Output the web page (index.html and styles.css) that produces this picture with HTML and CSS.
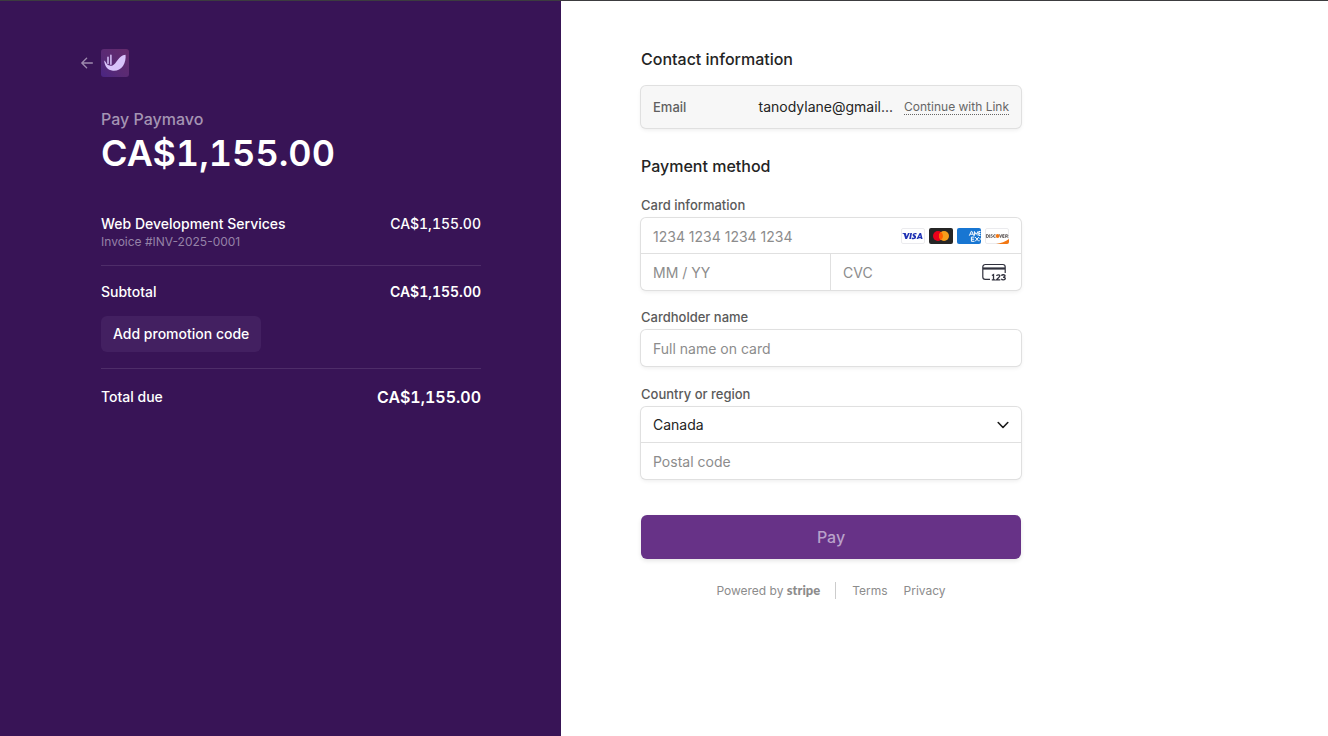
FILE: index.html
```html
<!DOCTYPE html>
<html lang="en">
<head>
<meta charset="utf-8">
<meta name="viewport" content="width=device-width, initial-scale=1">
<title>Paymavo checkout</title>
<link rel="stylesheet" href="styles.css">
</head>
<body>
<div class="checkout">
  <section class="summary">
    <div class="summary-inner">
      <header class="brand">
        <a class="back" href="#" aria-label="Back">
          <svg width="12" height="12" viewBox="0 0 12 12" fill="none" stroke="currentColor" stroke-width="1.3" stroke-linecap="round" stroke-linejoin="round"><path d="M11.4 6H.9M5.6 1.2.8 6l4.8 4.8"/></svg>
        </a>
        <svg class="brand-logo" width="28" height="28" viewBox="0 0 28 28" aria-label="Paymavo" role="img">
          <defs><linearGradient id="tile" x1="0" y1="1" x2="1" y2="0"><stop offset="0" stop-color="#492583"/><stop offset=".4" stop-color="#592a75"/><stop offset="1" stop-color="#652b6c"/></linearGradient></defs>
          <rect width="28" height="28" rx="3" fill="url(#tile)"/>
          <path d="M3.200 11.500C4.600 12 5 14.400 6.300 15.600c1.200 1 3.500 1.400 5.200.8C15.800 14.900 17.200 6.200 24.500 5.700c.5 3-.2 7.800-2.500 11.200-2.300 3.300-6 5.200-10 4.800C6.300 21.200 3.600 16.800 3.200 11.500Z" fill="#d8c3fa"/>
          <path d="M7 8.300v6.200M9.900 6.300v9" stroke="#d8c3fa" stroke-width="1.500" stroke-linecap="round"/>
        </svg>
      </header>
      <h1 class="payee">Pay Paymavo</h1>
      <p class="amount">CA$1,155.00</p>
      <div class="row item">
        <div>
          <p>Web Development Services</p>
          <p class="item-note">Invoice #INV-2025-0001</p>
        </div>
        <p class="price">CA$1,155.00</p>
      </div>
      <div class="totals">
        <div class="row"><p>Subtotal</p><p class="price strong">CA$1,155.00</p></div>
        <button class="promo" type="button">Add promotion code</button>
      </div>
      <div class="row total"><p>Total due</p><p class="price total-value">CA$1,155.00</p></div>
    </div>
  </section>

  <main class="payment">
    <form class="form">
      <h2 class="heading">Contact information</h2>
      <div class="box contact">
        <span class="contact-label">Email</span>
        <span class="contact-value">tanodylane@gmail...</span>
        <a class="contact-link" href="#">Continue with Link</a>
      </div>

      <h2 class="heading method">Payment method</h2>
      <div class="field">
        <label class="label" for="number">Card information</label>
        <div class="box">
          <div class="line">
            <input class="input" id="number" placeholder="1234 1234 1234 1234" inputmode="numeric">
            <div class="cards">
              <svg width="24" height="16" viewBox="0 0 24 16" role="img" aria-label="Visa">
                <rect x=".5" y=".5" width="23" height="15" rx="1.500" fill="#fff" stroke="#ebebee"/>
                <path fill="#1f32b4" d="M1.500 5h2.900q.5 0 .6.500l.6 3L7 5h1.800L6 11.100H4.300L2.900 6.200Q2.300 5.700 1.400 5.400ZM9.300 5H11l-1.100 6.100H8.200ZM15.700 5.200l-.3 1.300c-1-.4-2-.4-2.100.1-.1.700 2.100.8 1.800 2.600-.3 2-2.700 2.300-4.500 1.700l.3-1.400c1.200.5 2.300.4 2.400-.1.1-.7-2-.8-1.700-2.600.2-1.600 2.300-2.300 4.100-1.600ZM18.600 5h1.500l1.500 6.100H20l-.2-.9h-2.200l-.4.900h-1.700ZM18.100 8.900h1.400l-.4-2Z"/>
              </svg>
              <svg width="24" height="16" viewBox="0 0 24 16" role="img" aria-label="Mastercard">
                <rect width="24" height="16" rx="2" fill="#252525"/>
                <circle cx="9" cy="8" r="5" fill="#eb001b"/><circle cx="15" cy="8" r="5" fill="#f79e1b"/>
                <path d="M12 4a5 5 0 0 1 0 8 5 5 0 0 1 0-8" fill="#ff5f00"/>
              </svg>
              <svg width="24" height="16" viewBox="0 0 24 16" role="img" aria-label="American Express">
                <rect width="24" height="16" rx="2" fill="#1876d2"/>
                <g fill="none" stroke="#fff" stroke-width="1"><path d="m12.300 7.700 2-4.400h.5l2 4.400M13.200 6.200h2.700M17.400 7.700V3.500l1.800 2.900L21 3.500v4.200M22 3.500h1.500M22 5.500h1.500M22 7.500h1.500M22 3.500v4"/><path d="M17.400 9.100h-3v4.200h3M14.400 11.200h2.700M18.200 9.100l3.600 4.200M21.800 9.100l-3.600 4.200M22.500 9.900l1 1M22.500 12.500l1-1"/></g>
              </svg>
              <svg width="24" height="16" viewBox="0 0 24 16" role="img" aria-label="Discover">
                <rect x=".5" y=".5" width="23" height="15" rx="1.500" fill="#fff" stroke="#ebebee"/>
                <path d="M11 16c5-.8 9.500-2.500 13-5v3a2 2 0 0 1-2 2Z" fill="#f27712"/>
                <g fill="none" stroke="#4b4442" stroke-width=".8"><path d="M1.400 6.500v3.100h.7q1.500 0 1.500-1.500t-1.500-1.600ZM4.700 6.200v3.700M7.500 6.700Q5.800 6.400 5.900 7.200c.1.800 1.700.6 1.600 1.500-.1.900-1.100.9-1.900.6M10.600 6.800Q8.500 6.200 8.400 8t2.200 1.300M14.500 6.300l1.100 3.200 1.100-3.200M19.500 6.600h-1.800v2.900h1.800M17.700 8h1.600M20.700 9.900V6.600h.9q1.200 0 1.200.9t-1.200.8h-.9M21.800 8.300l1.200 1.500"/></g>
                <circle cx="12.600" cy="8" r="1.900" fill="#f27712"/>
              </svg>
            </div>
          </div>
          <div class="split">
            <input class="input" aria-label="Expiration date" placeholder="MM / YY">
            <div class="cvc">
              <input class="input" aria-label="Security code" placeholder="CVC">
              <svg width="24" height="18" viewBox="0 0 24 18" fill="none" aria-hidden="true">
                <path d="M8 16.300H3.200A2.400 2.400 0 0 1 .8 13.900V3.900a2.400 2.400 0 0 1 2.400-2.400h17.600a2.400 2.400 0 0 1 2.400 2.400v6" stroke="#30313d" stroke-width="1.200"/>
                <path d="M1 4.400h22v2.200H1Z" fill="#30313d"/>
                <g stroke="#30313d" stroke-width="1.300"><path d="m9.900 12.500 1.600-.9v5.100M9.800 16.900h3.600M14.500 12.900c.3-1.500 3.500-1.400 3.300.1-.1 1.100-1.800 2-3.300 3.800h3.800M19.400 12.700c.6-1.400 3.800-1.200 3.600.3 0 .8-.8 1.200-2 1.200 1.400 0 2.400.5 2.300 1.400-.2 1.600-3.500 1.500-4 .1"/></g>
              </svg>
            </div>
          </div>
        </div>
      </div>

      <div class="field">
        <label class="label" for="holder">Cardholder name</label>
        <div class="box"><input class="input" id="holder" placeholder="Full name on card"></div>
      </div>

      <div class="field billing">
        <label class="label" for="country">Country or region</label>
        <div class="box">
          <div class="line">
            <select class="input select" id="country"><option>Canada</option></select>
            <svg class="chevron" width="12" height="12" viewBox="0 0 12 12" fill="none" stroke="#1a1a1a" stroke-width="1.600" stroke-linecap="round" stroke-linejoin="round" aria-hidden="true"><path d="m1.200 3.500 4.800 5 4.800-5"/></svg>
          </div>
          <input class="input" aria-label="Postal code" placeholder="Postal code">
        </div>
      </div>

      <button class="pay" type="submit">Pay</button>
      <footer class="footer">
        <a class="powered" href="#">Powered by <span class="stripe">stripe</span></a>
        <nav class="legal"><a href="#">Terms</a><a href="#">Privacy</a></nav>
      </footer>
    </form>
  </main>
</div>
</body>
</html>
```
FILE: styles.css
```css
* { box-sizing: border-box; }

body {
  margin: 0;
  font-family: Inter, "Liberation Sans", sans-serif;
  font-size: 14px;
  line-height: 20px;
  color: #242424;
  background: #fff;
}

h1, h2, p { margin: 0; }
a { color: inherit; text-decoration: none; }
input, select, button { font: inherit; border: 0; border-radius: 0; margin: 0; }

.checkout {
  display: grid;
  grid-template-columns: minmax(0, 561px) minmax(0, 1fr);
  min-height: 100vh;
  border-top: 1px solid #3c3c3f;
}

.summary {
  display: flex;
  justify-content: flex-end;
  padding: 48px 80px;
  color: #fff;
  background: #381456;
  font-weight: 500;
}
.summary-inner { width: 100%; max-width: 380px; }

.brand { display: flex; align-items: center; gap: 8px; margin-left: -20px; }
.back { display: flex; color: #9e8bae; }
.brand-logo { display: block; }

.payee {
  margin-top: 30px;
  font-size: 16px;
  line-height: 24px;
  font-weight: 500;
  color: #a594b3;
}
.amount {
  font-size: 36px;
  line-height: 44px;
  font-weight: 600;
  font-variant-numeric: tabular-nums;
}

.row { display: flex; justify-content: space-between; gap: 16px; }
.item { margin-top: 39px; padding-bottom: 15px; }
.item-note { font-size: 12px; line-height: 16px; font-weight: 400; color: #9582a7; }
.price { font-variant-numeric: tabular-nums; }
.totals { padding: 16px 0; border: solid #4e2d69; border-width: 1px 0; }
.strong { font-weight: 600; }
.promo {
  height: 36px;
  margin-top: 14px;
  padding: 0 12px;
  border-radius: 6px;
  color: #fff;
  background: #432061;
  font-weight: 500;
}
.total { align-items: center; padding-top: 16px; line-height: 24px; }
.total-value { font-size: 16px; font-weight: 600; }

.payment { padding: 46px 80px; }
.form { width: 100%; max-width: 380px; }
.heading { font-size: 16px; line-height: 24px; font-weight: 500; }
.method { margin-top: 26px; }
.field { margin-top: 18px; }
.billing { margin-top: 19px; }
.label {
  display: block;
  margin-bottom: 4px;
  font-size: 13px;
  line-height: 18px;
  font-weight: 500;
  color: #5a5a5a;
}

.box {
  border-radius: 5px;
  background: #fff;
  box-shadow: 0 0 0 1px #e0e0e0, 0 2px 4px rgba(0, 0, 0, .08);
}
.contact {
  display: flex;
  align-items: center;
  height: 42px;
  margin-top: 15px;
  padding: 0 12px;
  background: #f7f7f7;
}
.contact-label { font-size: 13px; font-weight: 500; color: #606060; }
.contact-value { flex: 1; padding-right: 11px; text-align: right; }
.contact-link {
  font-size: 12px;
  line-height: 14px;
  color: #666;
  border-bottom: 1px dotted #666;
}

.input {
  display: block;
  width: 100%;
  min-width: 0;
  height: 36px;
  padding: 0 12px;
  background: transparent;
  color: #242424;
  outline: 0;
}
.input::placeholder { color: #8c8c8c; opacity: 1; }
.select { appearance: none; }
.line { display: flex; align-items: center; padding-right: 12px; box-shadow: inset 0 -1px #e0e0e0; }
.cards { display: flex; gap: 4px; }
.chevron { flex: none; }
.split { display: grid; grid-template-columns: 1fr 1fr; }
.cvc { display: flex; align-items: center; padding-right: 15px; box-shadow: -1px 0 #e0e0e0; }
.cvc svg { flex: none; }

.pay {
  display: block;
  width: 100%;
  height: 44px;
  margin-top: 36px;
  border-radius: 6px;
  color: #b9a1ca;
  background: #673287;
  font-size: 16px;
  font-weight: 500;
  box-shadow: 0 2px 4px rgba(0, 0, 0, .1);
}

.footer {
  display: flex;
  justify-content: center;
  align-items: center;
  margin-top: 23px;
  font-size: 12px;
  line-height: 16px;
  color: #8c8c8c;
}
.powered { padding-right: 15px; border-right: 1px solid #ccc; }
.stripe { font-family: Lato, sans-serif; font-size: 13px; font-weight: 900; }
.legal { display: flex; gap: 16px; padding-left: 16px; }
```
